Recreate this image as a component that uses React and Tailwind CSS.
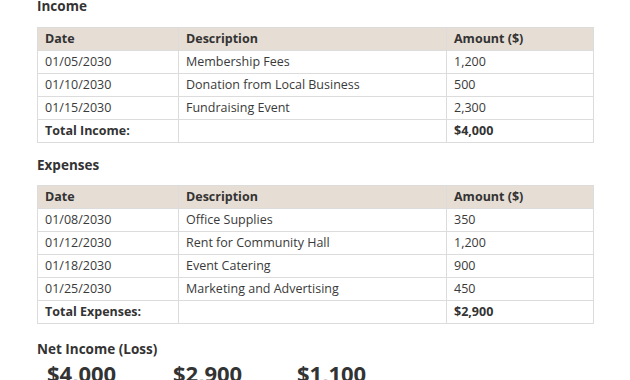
import React from 'react';

const income = [
    ['01/05/2030', 'Membership Fees', '1,200'],
    ['01/10/2030', 'Donation from Local Business', '500'],
    ['01/15/2030', 'Fundraising Event', '2,300'],
];

const expenses = [
    ['01/08/2030', 'Office Supplies', '350'],
    ['01/12/2030', 'Rent for Community Hall', '1,200'],
    ['01/18/2030', 'Event Catering', '900'],
    ['01/25/2030', 'Marketing and Advertising', '450'],
];

function Ledger({rows, totalLabel, total}) {
    return (
        <table className="w-[556px] border-collapse table-fixed text-[12.5px] text-[#3a3a3a]">
            <colgroup>
                <col className="w-[141px]"/>
                <col className="w-[268px]"/>
                <col className="w-[147px]"/>
            </colgroup>
            <thead>
            <tr className="bg-[#e6ddd4] h-[23px] font-bold text-[#333]">
                <td className="border border-[#dcdcdc] px-[7px] py-0">Date</td>
                <td className="border border-[#dcdcdc] px-[7px] py-0">Description</td>
                <td className="border border-[#dcdcdc] px-[7px] py-0">Amount ($)</td>
            </tr>
            </thead>
            <tbody>
            {rows.map((row, index) => (
                <tr key={index} className="h-[23px]">
                    {row.map((cell, i) => (
                        <td key={i} className="border border-[#dcdcdc] px-[7px] py-0">{cell}</td>
                    ))}
                </tr>
            ))}
            <tr className="h-[23px] font-bold text-[#333]">
                <td className="border border-[#dcdcdc] px-[7px] py-0">{totalLabel}</td>
                <td className="border border-[#dcdcdc] px-[7px] py-0"></td>
                <td className="border border-[#dcdcdc] px-[7px] py-0">{total}</td>
            </tr>
            </tbody>
        </table>
    );
}

export default function App() {
    return (
        <div className="w-[630px] h-[380px] overflow-hidden bg-white pl-[37px] font-['Open_Sans',sans-serif] text-[#333]">
            <div className="mt-[-4px] h-5 leading-5 text-[13.5px] font-bold">Income</div>
            <div className="mt-[11px]">
                <Ledger rows={income} totalLabel="Total Income:" total="$4,000"/>
            </div>

            <div className="mt-3 h-5 leading-5 text-[13.5px] font-bold">Expenses</div>
            <div className="mt-[10px]">
                <Ledger rows={expenses} totalLabel="Total Expenses:" total="$2,900"/>
            </div>

            <div className="mt-[15px] h-5 leading-5 text-[13.5px] font-bold">Net Income (Loss)</div>
            <div className="mt-0 flex pl-[10px] text-[22px] font-bold leading-7">
                <div className="w-[126px]">$4,000</div>
                <div className="w-[124px]">$2,900</div>
                <div>$1,100</div>
            </div>
        </div>
    );
}
